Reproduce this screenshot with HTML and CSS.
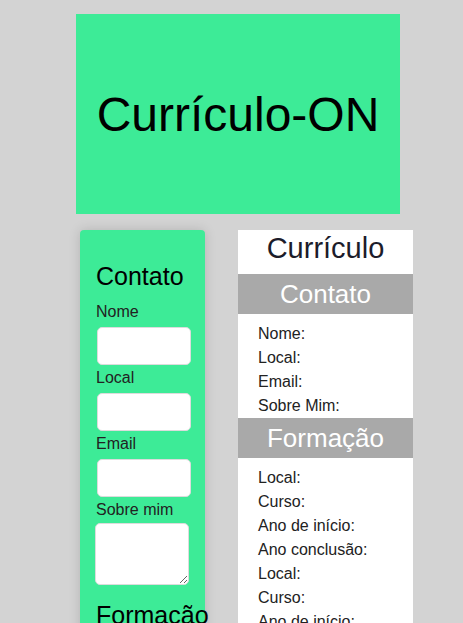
FILE: index.html
```html
<!DOCTYPE html>
<html lang="pt-BR">
<head>
<meta charset="utf-8">
<title>Currículo-ON</title>
<link rel="stylesheet" href="styles.css">
</head>
<body>
<header class="banner"><h1>Currículo-ON</h1></header>
<main class="layout">
  <form class="form-panel">
    <h2>Contato</h2>
    <label>Nome</label>
    <input type="text">
    <label>Local</label>
    <input type="text">
    <label>Email</label>
    <input type="text">
    <label>Sobre mim</label>
    <textarea></textarea>
    <h2 class="next">Formação</h2>
  </form>
  <section class="cv">
    <h2 class="cv-title">Currículo</h2>
    <h3 class="cv-head">Contato</h3>
    <ul class="cv-list">
      <li>Nome:</li>
      <li>Local:</li>
      <li>Email:</li>
      <li>Sobre Mim:</li>
    </ul>
    <h3 class="cv-head">Formação</h3>
    <ul class="cv-list">
      <li>Local:</li>
      <li>Curso:</li>
      <li>Ano de início:</li>
      <li>Ano conclusão:</li>
      <li>Local:</li>
      <li>Curso:</li>
      <li>Ano de início:</li>
      <li>Ano conclusão:</li>
    </ul>
  </section>
</main>
</body>
</html>
```
FILE: styles.css
```css
html, body { margin: 0; padding: 0; }
body {
  background: #d3d3d3;
  font-family: "Liberation Sans", Arial, sans-serif;
  color: #222;
  overflow: hidden;
  height: 623px;
}
.banner {
  width: 324px;
  height: 200px;
  margin: 14px 0 0 76px;
  background: #3deb97;
  display: flex;
  align-items: center;
  justify-content: center;
}
.banner h1 {
  margin: 0;
  font-weight: normal;
  font-size: 48px;
  color: #000;
}
.layout {
  display: flex;
  align-items: flex-start;
  gap: 33px;
  margin: 16px 0 0 80px;
}
.form-panel {
  width: 125px;
  box-sizing: border-box;
  background: #3deb97;
  border-radius: 4px;
  padding: 32px 0 40px 16px;
  box-shadow: 0 0 12px rgba(0,0,0,0.15);
  display: flex;
  flex-direction: column;
  align-items: flex-start;
}
.form-panel h2 {
  margin: 0 0 13px;
  font-weight: normal;
  font-size: 25px;
  line-height: 28px;
  color: #000;
  white-space: nowrap;
}
.form-panel h2.next { margin-top: 16px; }
.form-panel label {
  font-size: 16px;
  line-height: 18px;
  color: #222;
}
.form-panel input {
  width: 94px;
  height: 38px;
  box-sizing: border-box;
  margin: 6px 0 4px 1px;
  border: 1px solid #dcdcdc;
  border-radius: 5px;
  background: #fff;
}
.form-panel textarea {
  width: 94px;
  height: 62px;
  box-sizing: border-box;
  margin: 4px 0 0 -1px;
  border: 1px solid #dcdcdc;
  border-radius: 5px;
  background: #fff;
}
.cv {
  width: 175px;
  background: #fff;
  min-height: 400px;
}
.cv-title {
  margin: 0;
  height: 44px;
  line-height: 36px;
  font-weight: normal;
  font-size: 29px;
  text-align: center;
  color: #1c1c2a;
}
.cv-head {
  margin: 0;
  height: 40px;
  line-height: 40px;
  background: #a9a9a9;
  color: #fff;
  font-weight: normal;
  font-size: 26px;
  text-align: center;
}
.cv-list {
  list-style: none;
  margin: 0;
  padding: 8px 0 0 20px;
  font-size: 16px;
  line-height: 24px;
  color: #222;
}
```
